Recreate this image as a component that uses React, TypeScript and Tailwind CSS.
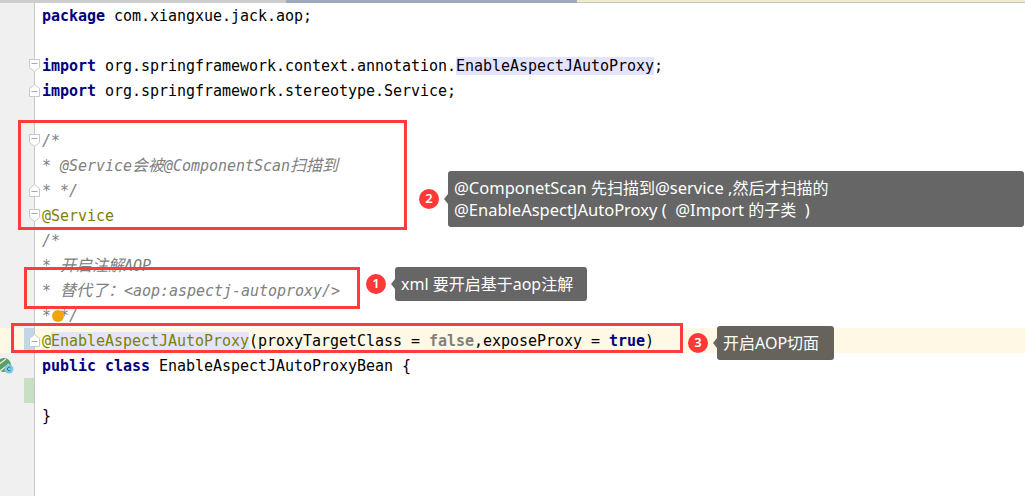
import type { ReactNode } from "react";

const MONO = "font-['DejaVu_Sans_Mono','Noto_Sans_CJK_SC',monospace]";

function Kw({ children }: { children: ReactNode }) {
  return <span className="font-bold text-[#000080]">{children}</span>;
}
function Cm({ children }: { children: ReactNode }) {
  return <span className="italic text-[#808080]">{children}</span>;
}
function An({ children }: { children: ReactNode }) {
  return <span className="text-[#808000]">{children}</span>;
}
function Zh({ children }: { children: ReactNode }) {
  return <span className="align-[0.5px] text-[16px] leading-none">{children}</span>;
}
function La({ children }: { children: ReactNode }) {
  return <span className="text-[16.5px]">{children}</span>;
}

function Fold({ end }: { end?: boolean }) {
  return (
    <svg width="11" height="13" viewBox="0 0 11 13" className="shrink-0">
      <path
        d={end ? "M0.5 12.5V4.5L5.5 0.5L10.5 4.5V12.5Z" : "M0.5 0.5H10.5V8.5L5.5 12.5L0.5 8.5Z"}
        fill="#fff"
        stroke="#c8c8c8"
      />
      <path d={end ? "M2.5 7.5H8.5" : "M2.5 4.5H8.5"} stroke="#a8a8a8" />
    </svg>
  );
}

function Bean() {
  return (
    <svg width="14" height="16" viewBox="0 0 14 16" className="shrink-0">
      <circle cx="4" cy="7" r="7" fill="#5f9f62" />
      <path d="M-2 7L6 1M0 13L9 6" stroke="#e8efe6" strokeWidth="1.2" />
      <circle cx="9" cy="11" r="4.5" fill="#79cbe6" />
      <path d="M10.5 9.8A1.8 1.8 0 1 0 10.5 12.2" fill="none" stroke="#3f6f80" strokeWidth="1" />
    </svg>
  );
}

type Row = { code: ReactNode; gutter?: ReactNode; gutterClass?: string; rowClass?: string };

const rows: Row[] = [
  { code: <><Kw>package</Kw> com.xiangxue.jack.aop;</> },
  { code: <></> },
  {
    code: <><Kw>import</Kw> org.springframework.context.annotation.<span className="bg-[#e4e4ff]">EnableAspectJAutoProxy</span>;</>,
    gutter: <Fold />,
  },
  { code: <><Kw>import</Kw> org.springframework.stereotype.Service;</>, gutter: <Fold end /> },
  { code: <></> },
  { code: <Cm>/*</Cm>, gutter: <Fold /> },
  { code: <Cm>* @Service<Zh>会被</Zh>@ComponentScan<Zh>扫描到</Zh></Cm> },
  { code: <Cm>* */</Cm>, gutter: <Fold end /> },
  { code: <An>@Service</An>, gutter: <Fold /> },
  { code: <Cm>/*</Cm> },
  { code: <Cm>* <Zh>开启注解</Zh>AOP</Cm> },
  { code: <Cm>* <Zh>替代了：</Zh>&lt;aop:aspectj-autoproxy/&gt;</Cm> },
  { code: <Cm>* */</Cm> },
  {
    code: <><An>@<span className="bg-[#e4e4ff]">EnableAspectJAutoProxy</span></An>(proxyTargetClass = <span className="font-bold text-[#808080]">false</span>,exposeProxy = <Kw>true</Kw>)</>,
    gutter: <Fold end />,
    gutterClass: "bg-[linear-gradient(90deg,#fff8e5_24px,#c3d6e8_24px)]",
    rowClass: "bg-[#fff8e5]",
  },
  {
    code: <><Kw>public class</Kw> EnableAspectJAutoProxyBean {"{"}</>,
    gutter: <Bean />,
    gutterClass: "bg-[#f0f0f0] !pl-0",
  },
  { code: <></>, gutterClass: "bg-[linear-gradient(90deg,#f0f0f0_24px,#c9dfc3_24px)]" },
  { code: <>{"}"}</> },
];

function Box({ className }: { className: string }) {
  return <div className={"absolute border-[3px] border-[#ff3b3b] " + className} />;
}

function Note({ n, className, tip, children }: { n: number; className: string; tip: string; children: ReactNode }) {
  return (
    <div className={"absolute flex items-center gap-[5px] font-['Noto_Sans','Noto_Sans_CJK_SC',sans-serif] " + className}>
      <div className="flex h-5 w-5 items-center justify-center rounded-full bg-[#ff3838] text-[13px] font-semibold text-white">{n}</div>
      <div className="flex items-center">
        <div className="h-0 w-0 border-y-[5px] border-r-[4px] border-y-transparent border-r-[#666666]" />
        <div className={"rounded-[3px] text-[16px] leading-[22px] text-white " + tip}>{children}</div>
      </div>
    </div>
  );
}

export default function App() {
  return (
    <div className="relative flex h-[496px] w-[1025px] flex-col overflow-hidden bg-white">
      <div className="flex h-[3px] shrink-0">
        <div className="w-[286px] bg-[#cdcdcd]" />
        <div className="w-[291px] bg-[#9dabbd]" />
        <div className="grow border-b border-b-[#c8c8c0] bg-[#efebcd]" />
      </div>

      <div className={"flex grow flex-col whitespace-pre text-[15px] tracking-[-0.03px] text-black " + MONO}>
        {rows.map((r, i) => (
          <div key={i} className={"flex h-[25px] shrink-0 " + (r.rowClass ?? "")}>
            <div className={"flex w-[35px] shrink-0 items-center border-r border-r-[#c8c8c8] pl-[29px] " + (r.gutterClass ?? "bg-[#f0f0f0]")}>
              {r.gutter}
            </div>
            <div className="pl-[7px] leading-[27px]">{r.code}</div>
          </div>
        ))}
        <div className="w-[35px] grow border-r border-r-[#c8c8c8] bg-[#f0f0f0]" />
      </div>

      {/* orange bulb overlapping the comment */}
      <div className="absolute left-[52px] top-[310px] h-3 w-3 rounded-full bg-[#f0a30a]" />

      {/* annotation overlays */}
      <Box className="left-[18px] top-[120px] h-[110px] w-[389px]" />
      <Box className="left-[24px] top-[267px] h-[42px] w-[336px]" />
      <Box className="left-[11px] top-[323px] h-[30px] w-[672px]" />

      <Note n={2} className="left-[419px] top-[171px]" tip="bg-[#666666] w-[576px] h-[56px] px-[6px] py-[6px] whitespace-pre">
        <La>@ComponetScan </La>先扫描到<La>@service ,</La>然后才扫描的
        <br />
        <La>@EnableAspectJAutoProxy (  @Import </La>的子类<La>  )</La>
      </Note>
      <Note n={1} className="left-[366px] top-[267px]" tip="bg-[#666666] w-[192px] h-[34px] px-[6px] py-[6px]">
        xml 要开启基于aop注解
      </Note>
      <Note n={3} className="left-[688px] top-[326px]" tip="bg-[#66635c] w-[117px] h-[34px] px-[6px] py-[6px]">
        开启AOP切面
      </Note>
    </div>
  );
}
